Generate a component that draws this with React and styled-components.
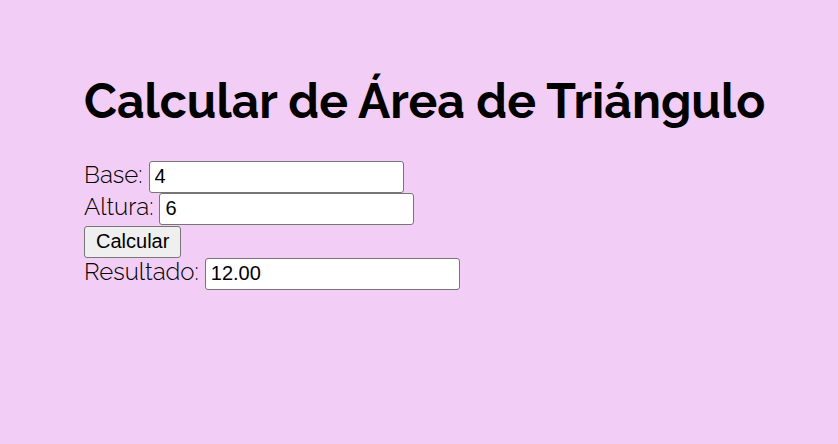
import React, { useState } from 'react';
import styled, { createGlobalStyle } from 'styled-components';

const GlobalStyle = createGlobalStyle`
  body {
    margin: 0;
    background: #f2cdf5;
    color: #000;
    font-family: Raleway, Lato, sans-serif;
  }
`;

const Page = styled.main`
  padding: 73px 64px 64px 84px;
`;

const Title = styled.h1`
  margin: 0 0 32px;
  font-size: 48px;
  line-height: 56px;
  font-weight: 700;
  white-space: nowrap;
`;

const Form = styled.form`
  display: flex;
  flex-direction: column;
  gap: 1px;
`;

const Group = styled.div`
  display: flex;
  flex-direction: column;
  align-items: flex-start;
`;

const Field = styled.div`
  display: flex;
  align-items: baseline;
  gap: 6px;
`;

const Label = styled.label`
  font-size: 24px;
  line-height: 24px;
  font-weight: 300;
`;

const TextInput = styled.input`
  box-sizing: border-box;
  width: 255px;
  height: 32px;
  padding: 1px 5px 2px;
  border: 1px solid #767676;
  border-radius: 3px;
  background: #fff;
  color: #000;
  font: 20px "Liberation Sans", Arial, sans-serif;
`;

const Button = styled.button`
  box-sizing: border-box;
  height: 32px;
  padding: 0 11px 1px;
  border: 1px solid #767676;
  border-radius: 3px;
  background: #efefef;
  color: #000;
  font: 20px "Liberation Sans", Arial, sans-serif;
`;

export default function App() {
  const [base, setBase] = useState('4');
  const [height, setHeight] = useState('6');
  const [result, setResult] = useState('12.00');

  const calculate = (event) => {
    event.preventDefault();
    setResult(((Number(base) * Number(height)) / 2).toFixed(2));
  };

  return (
    <Page>
      <GlobalStyle />
      <Title>Calcular de Área de Triángulo</Title>
      <Form onSubmit={calculate}>
        <Group>
          <Field>
            <Label htmlFor="base">Base:</Label>
            <TextInput id="base" value={base} onChange={(e) => setBase(e.target.value)} />
          </Field>
          <Field>
            <Label htmlFor="altura">Altura:</Label>
            <TextInput id="altura" value={height} onChange={(e) => setHeight(e.target.value)} />
          </Field>
        </Group>
        <Group>
          <Button type="submit">Calcular</Button>
          <Field>
            <Label htmlFor="resultado">Resultado:</Label>
            <TextInput id="resultado" value={result} readOnly />
          </Field>
        </Group>
      </Form>
    </Page>
  );
}
